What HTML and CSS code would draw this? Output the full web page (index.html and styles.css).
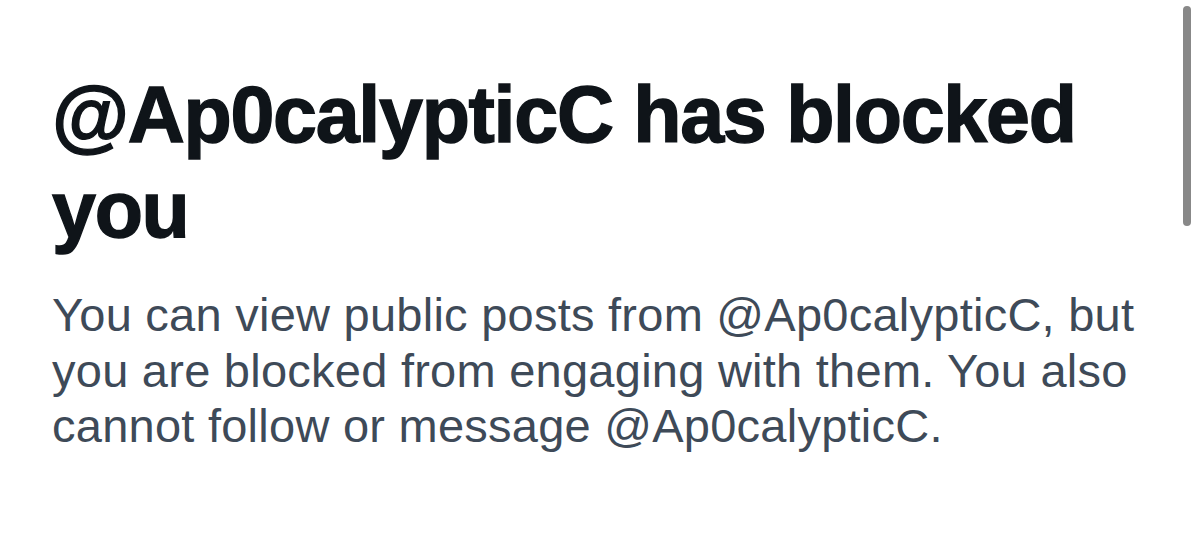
FILE: index.html
```html
<!DOCTYPE html>
<html>
<head>
<meta charset="utf-8">
<link rel="stylesheet" href="styles.css">
</head>
<body>
<div class="page">
  <main class="content">
    <h1 class="title">@Ap0calypticC has blocked you</h1>
    <p class="desc">You can view public posts from @Ap0calypticC, but you are blocked from engaging with them. You also cannot follow or message @Ap0calypticC.</p>
  </main>
  <div class="scrollbar"><div class="thumb"></div></div>
</div>
</body>
</html>
```
FILE: styles.css
```css
html, body {
  margin: 0;
  padding: 0;
  background: #ffffff;
}
.page {
  width: 1200px;
  height: 547px;
  display: flex;
  overflow: hidden;
}
.content {
  flex: 1;
  padding: 67px 0 0 52px;
}
.title {
  margin: 0;
  font-family: "Liberation Sans", Arial, sans-serif;
  font-weight: 700;
  font-size: 79px;
  line-height: 95px;
  letter-spacing: -1.3px;
  -webkit-text-stroke: 1.4px #0f1419;
  color: #0f1419;
  width: 1080px;
}
.desc {
  margin: 30px 0 0 0;
  font-family: "Liberation Sans", Arial, sans-serif;
  font-size: 47px;
  line-height: 55.5px;
  letter-spacing: 0.25px;
  color: #3e4a58;
  width: 1115px;
}
.scrollbar {
  width: 17px;
  padding-top: 6px;
  display: flex;
  justify-content: flex-start;
}
.thumb {
  width: 8px;
  height: 220px;
  border-radius: 4px;
  background: #888888;
}
```
